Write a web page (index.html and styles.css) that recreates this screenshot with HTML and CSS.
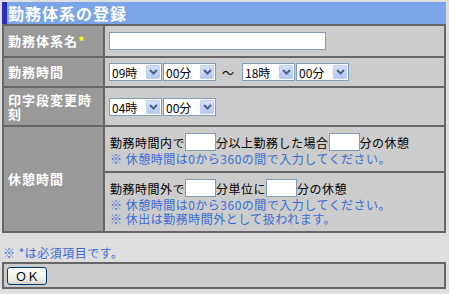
FILE: index.html
```html
<!DOCTYPE html>
<html lang="ja">
<head>
  <meta charset="UTF-8" />
  <title>勤務体系の登録</title>
  <link rel="stylesheet" href="styles.css">
</head>
<body>
  <h1 class="title">勤務体系の登録</h1>

  <div class="form">
    <div class="label">勤務体系名<span class="req">*</span></div>
    <div class="value">
      <input type="text" class="name-input">
    </div>

    <div class="label">勤務時間</div>
    <div class="value">
      <span class="sel"><select><option>09時</option></select><span class="arrow"><svg width="9" height="6" viewBox="0 0 9 6"><path d="M1 1 L4.5 4.5 L8 1" fill="none" stroke="#4d6185" stroke-width="2"/></svg></span></span>
      <span class="sel"><select><option>00分</option></select><span class="arrow"><svg width="9" height="6" viewBox="0 0 9 6"><path d="M1 1 L4.5 4.5 L8 1" fill="none" stroke="#4d6185" stroke-width="2"/></svg></span></span>
      <span class="tilde">～</span>
      <span class="sel"><select><option>18時</option></select><span class="arrow"><svg width="9" height="6" viewBox="0 0 9 6"><path d="M1 1 L4.5 4.5 L8 1" fill="none" stroke="#4d6185" stroke-width="2"/></svg></span></span>
      <span class="sel"><select><option>00分</option></select><span class="arrow"><svg width="9" height="6" viewBox="0 0 9 6"><path d="M1 1 L4.5 4.5 L8 1" fill="none" stroke="#4d6185" stroke-width="2"/></svg></span></span>
    </div>

    <div class="label">印字段変更時刻</div>
    <div class="value">
      <span class="sel"><select><option>04時</option></select><span class="arrow"><svg width="9" height="6" viewBox="0 0 9 6"><path d="M1 1 L4.5 4.5 L8 1" fill="none" stroke="#4d6185" stroke-width="2"/></svg></span></span>
      <span class="sel"><select><option>00分</option></select><span class="arrow"><svg width="9" height="6" viewBox="0 0 9 6"><path d="M1 1 L4.5 4.5 L8 1" fill="none" stroke="#4d6185" stroke-width="2"/></svg></span></span>
    </div>

    <div class="label rest-label">休憩時間</div>
    <div class="value stack">
      <div class="line">勤務時間内で<input type="text" class="num">分以上勤務した場合<input type="text" class="num">分の休憩</div>
      <div class="note">※ 休憩時間は0から360の間で入力してください。</div>
    </div>
    <div class="value stack">
      <div class="line">勤務時間外で<input type="text" class="num">分単位に<input type="text" class="num">分の休憩</div>
      <div class="note">※ 休憩時間は0から360の間で入力してください。</div>
      <div class="note">※ 休出は勤務時間外として扱われます。</div>
    </div>
  </div>

  <div class="note footnote">※ *は必須項目です。</div>

  <div class="actions">
    <button type="button" class="btn">ＯＫ</button>
  </div>
</body>
</html>
```

FILE: styles.css
```css
body {
  margin: 2px 3px 0 2px;
  background: #dedede;
  font-family: "Noto Sans CJK JP", "DejaVu Sans", sans-serif;
  font-size: 12px;
  color: #000;
}

.title {
  margin: 0;
  height: 22px;
  line-height: 22px;
  background: #7ba5e8;
  border-left: 5px solid #2b2bb5;
  padding-left: 1px;
  color: #fff;
  font-size: 16px;
  font-weight: bold;
  letter-spacing: 1px;
}

.form {
  display: grid;
  grid-template-columns: 99px 1fr;
  grid-template-rows: 30px 28px 37px 44px 58px;
  gap: 2px;
  background: #666;
  border: 2px solid #666;
}

.label {
  background: #999;
  color: #fff;
  font-size: 13px;
  font-weight: bold;
  letter-spacing: 1px;
  line-height: 14px;
  padding-left: 4px;
  display: flex;
  align-items: center;
}
.req {
  color: #ffff00;
}
.rest-label {
  grid-row: span 2;
}

.value {
  background: #ccc;
  padding-left: 4px;
  display: flex;
  align-items: center;
}
.value.stack {
  flex-direction: column;
  align-items: flex-start;
  justify-content: center;
  padding-left: 5px;
  letter-spacing: 0.5px;
}

.line {
  height: 20px;
  display: flex;
  align-items: center;
  white-space: nowrap;
}
.line input {
  margin: 0 1px;
}
.note {
  color: #3a6cd6;
  line-height: 14px;
  height: 14px;
  white-space: nowrap;
}

input[type="text"] {
  box-sizing: border-box;
  border: 1px solid #7f9db9;
  background: #fff;
  margin: 0;
  padding: 0 2px;
  font: inherit;
}
.name-input {
  width: 217px;
  height: 18px;
}
.num {
  width: 31px;
  height: 18px;
}

.sel {
  position: relative;
  display: inline-block;
  box-sizing: border-box;
  width: 53px;
  height: 18px;
  border: 1px solid #7f9db9;
  background: #fff;
  margin-right: 1px;
}
.sel select {
  appearance: none;
  -webkit-appearance: none;
  border: 0;
  background: transparent;
  width: 100%;
  height: 16px;
  padding: 0 0 0 2px;
  margin: 0;
  font: inherit;
  line-height: 16px;
  color: #000;
}
.sel .arrow {
  position: absolute;
  top: 1px;
  right: 1px;
  bottom: 1px;
  width: 14px;
  box-sizing: border-box;
  border: 1px solid #bcd0f6;
  border-radius: 1px;
  background: linear-gradient(#d4e0fd, #b6c9f5);
  display: flex;
  align-items: center;
  justify-content: center;
}
.tilde {
  margin: 0 8px 0 5px;
}

.footnote {
  margin-top: 13px;
  padding-left: 1px;
  letter-spacing: 0.5px;
}

.actions {
  margin-top: 2px;
  background: #ccc;
  border: 2px solid #666;
  padding: 3px 0 0 3px;
  height: 20px;
}
.btn {
  width: 40px;
  height: 18px;
  padding: 0;
  border: 1px solid #003c74;
  border-radius: 3px;
  background: linear-gradient(#ffffff, #f0f0ea 70%, #d6d0c5);
  font: inherit;
  font-size: 12px;
  line-height: 16px;
  color: #000;
}
```
